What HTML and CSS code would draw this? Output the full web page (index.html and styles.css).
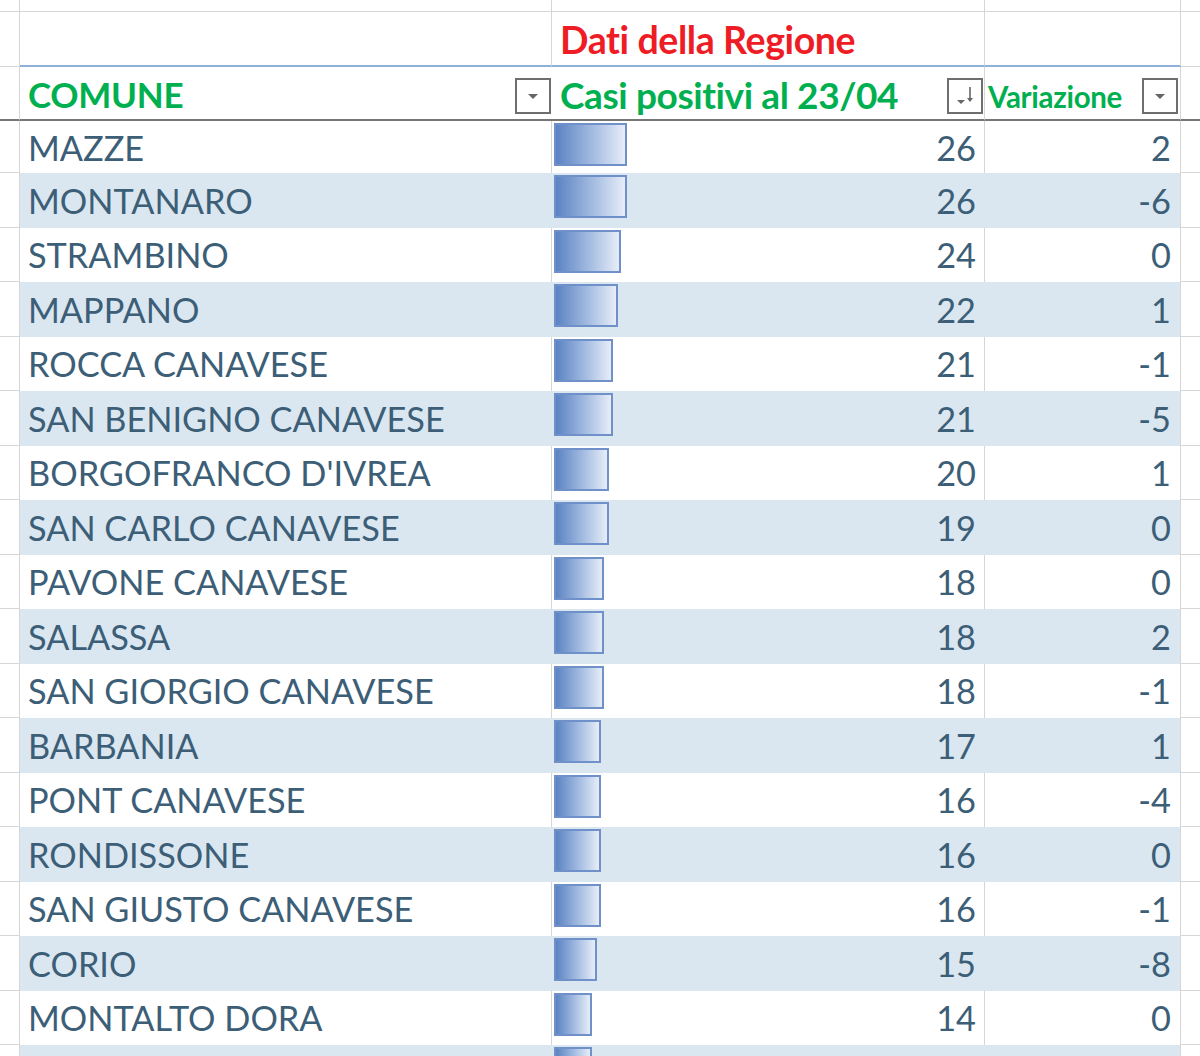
FILE: index.html
```html
<!DOCTYPE html>
<html lang="it">
<head>
<meta charset="utf-8">
<title>Casi positivi</title>
<link rel="stylesheet" href="styles.css">
</head>
<body>
<div class="sheet">
  <div class="row top">
    <div class="c0"></div><div class="c1"></div><div class="c2"></div><div class="c3"></div><div class="c4"></div>
  </div>
  <div class="row h1">
    <div class="c0"></div><div class="c1"></div><div class="c2"><span class="red">Dati della Regione</span></div><div class="c3"></div><div class="c4"></div>
  </div>
  <div class="row h2">
    <div class="c0"></div>
    <div class="c1"><span class="hd">COMUNE</span>
      <svg class="btn" viewBox="0 0 36 36"><rect x="1" y="1" width="34" height="34" fill="#fff" stroke="#6e6e6e" stroke-width="2"/><path d="M13 16h10l-5 5z" fill="#666"/></svg>
    </div>
    <div class="c2"><span class="hd lg">Casi positivi al 23/04</span>
      <svg class="btn" viewBox="0 0 36 36"><rect x="1" y="1" width="34" height="34" fill="#fff" stroke="#6e6e6e" stroke-width="2"/><path d="M10 22h8l-4 4z" fill="#666"/><path d="M23 9v14" stroke="#666" stroke-width="1.6"/><path d="M20 20l3 4 3-4z" fill="#666"/></svg>
    </div>
    <div class="c3"><span class="hd sm">Variazione</span>
      <svg class="btn" viewBox="0 0 36 36"><rect x="1" y="1" width="34" height="34" fill="#fff" stroke="#6e6e6e" stroke-width="2"/><path d="M13 16h10l-5 5z" fill="#666"/></svg>
    </div>
    <div class="c4"></div>
  </div>

  <div class="row d first"><div class="c0"></div><div class="c1">MAZZE</div><div class="c2"><span class="bar" style="width:73px"></span><span class="num">26</span></div><div class="c3">2</div><div class="c4"></div></div>
  <div class="row d band"><div class="c0"></div><div class="c1">MONTANARO</div><div class="c2"><span class="bar" style="width:73px"></span><span class="num">26</span></div><div class="c3">-6</div><div class="c4"></div></div>
  <div class="row d"><div class="c0"></div><div class="c1">STRAMBINO</div><div class="c2"><span class="bar" style="width:67px"></span><span class="num">24</span></div><div class="c3">0</div><div class="c4"></div></div>
  <div class="row d band"><div class="c0"></div><div class="c1">MAPPANO</div><div class="c2"><span class="bar" style="width:64px"></span><span class="num">22</span></div><div class="c3">1</div><div class="c4"></div></div>
  <div class="row d"><div class="c0"></div><div class="c1">ROCCA CANAVESE</div><div class="c2"><span class="bar" style="width:59px"></span><span class="num">21</span></div><div class="c3">-1</div><div class="c4"></div></div>
  <div class="row d band"><div class="c0"></div><div class="c1">SAN BENIGNO CANAVESE</div><div class="c2"><span class="bar" style="width:59px"></span><span class="num">21</span></div><div class="c3">-5</div><div class="c4"></div></div>
  <div class="row d"><div class="c0"></div><div class="c1">BORGOFRANCO D'IVREA</div><div class="c2"><span class="bar" style="width:55px"></span><span class="num">20</span></div><div class="c3">1</div><div class="c4"></div></div>
  <div class="row d band"><div class="c0"></div><div class="c1">SAN CARLO CANAVESE</div><div class="c2"><span class="bar" style="width:55px"></span><span class="num">19</span></div><div class="c3">0</div><div class="c4"></div></div>
  <div class="row d"><div class="c0"></div><div class="c1">PAVONE CANAVESE</div><div class="c2"><span class="bar" style="width:50px"></span><span class="num">18</span></div><div class="c3">0</div><div class="c4"></div></div>
  <div class="row d band"><div class="c0"></div><div class="c1">SALASSA</div><div class="c2"><span class="bar" style="width:50px"></span><span class="num">18</span></div><div class="c3">2</div><div class="c4"></div></div>
  <div class="row d"><div class="c0"></div><div class="c1">SAN GIORGIO CANAVESE</div><div class="c2"><span class="bar" style="width:50px"></span><span class="num">18</span></div><div class="c3">-1</div><div class="c4"></div></div>
  <div class="row d band"><div class="c0"></div><div class="c1">BARBANIA</div><div class="c2"><span class="bar" style="width:47px"></span><span class="num">17</span></div><div class="c3">1</div><div class="c4"></div></div>
  <div class="row d"><div class="c0"></div><div class="c1">PONT CANAVESE</div><div class="c2"><span class="bar" style="width:47px"></span><span class="num">16</span></div><div class="c3">-4</div><div class="c4"></div></div>
  <div class="row d band"><div class="c0"></div><div class="c1">RONDISSONE</div><div class="c2"><span class="bar" style="width:47px"></span><span class="num">16</span></div><div class="c3">0</div><div class="c4"></div></div>
  <div class="row d"><div class="c0"></div><div class="c1">SAN GIUSTO CANAVESE</div><div class="c2"><span class="bar" style="width:47px"></span><span class="num">16</span></div><div class="c3">-1</div><div class="c4"></div></div>
  <div class="row d band"><div class="c0"></div><div class="c1">CORIO</div><div class="c2"><span class="bar" style="width:43px"></span><span class="num">15</span></div><div class="c3">-8</div><div class="c4"></div></div>
  <div class="row d"><div class="c0"></div><div class="c1">MONTALTO DORA</div><div class="c2"><span class="bar" style="width:38px"></span><span class="num">14</span></div><div class="c3">0</div><div class="c4"></div></div>
  <div class="row d band"><div class="c0"></div><div class="c1"></div><div class="c2"><span class="bar" style="width:38px"></span><span class="num"></span></div><div class="c3"></div><div class="c4"></div></div>
</div>
</body>
</html>
```
FILE: styles.css
```css
html, body {
  margin: 0;
  padding: 0;
  background: #fff;
  overflow: hidden;
}
.sheet {
  width: 1200px;
  height: 1056px;
  overflow: hidden;
  font-family: Lato, "Open Sans", sans-serif;
  color: #3c5e77;
}
.row {
  display: grid;
  grid-template-columns: 20px 532px 433px 196px 19px;
}
.row > div {
  box-sizing: border-box;
}
.c0, .c1, .c2, .c3 {
  border-right: 1px solid #d6d6d6;
}
.c0, .c4 {
  border-bottom: 1px solid #d6d6d6;
}
.top { height: 12px; }
.top .c1, .top .c2, .top .c3 { border-bottom: 1px solid #d6d6d6; }

.h1 { height: 55px; }
.h1 .c1, .h1 .c2, .h1 .c3 { border-bottom: 2px solid #8fb1d8; }
.h1 .c2 {
  display: flex;
  align-items: center;
  padding-left: 8px;
  padding-top: 1px;
}
.red {
  color: #ee1c24;
  font-weight: 700;
  font-size: 37.5px;
  letter-spacing: -0.4px;
}

.h2 { height: 54px; }
.h2 > div { border-bottom: 2px solid #767676; }
.h2 .c1, .h2 .c2, .h2 .c3 {
  display: flex;
  align-items: center;
  justify-content: space-between;
  padding-left: 8px;
  padding-right: 1px;
  padding-top: 4px;
}
.h2 .c1 { border-right: none; }
.hd {
  color: #00b050;
  font-weight: 700;
  font-size: 35px;
  letter-spacing: -0.3px;
  margin-top: -2px;
}
.hd.lg { font-size: 37px; letter-spacing: -0.4px; }
.hd.sm { font-size: 29.5px; letter-spacing: -0.3px; margin-top: 2px; }
.btn {
  width: 36px;
  height: 36px;
  flex: none;
  margin-top: 2px;
}
.h2 .c3 { padding-left: 3px; padding-right: 2px; }

.d { height: 54.5px; }
.d.first { height: 52px; }
.d .c1, .d .c2, .d .c3 {
  display: flex;
  align-items: center;
  font-size: 34.3px;
  white-space: nowrap;
}
.d .c1 { padding-left: 8px; }
.d .c2 { position: relative; padding-right: 8px; }
.d .c3 { justify-content: flex-end; padding-right: 9px; }
.num { margin-left: auto; }
.bar {
  position: absolute;
  left: 2px;
  top: 2px;
  height: 43px;
  box-sizing: border-box;
  border: 2px solid #6f90c8;
  background: linear-gradient(to right, #5b83c3 0%, #9fb8df 50%, #e6edf8 100%);
}
.d.band .c1, .d.band .c2, .d.band .c3 { background: #dae7f1; }
.d.band .c1, .d.band .c2 { border-right-color: #dae7f1; }
.d.band .c3 { border-right-color: #d6d6d6; }
```
